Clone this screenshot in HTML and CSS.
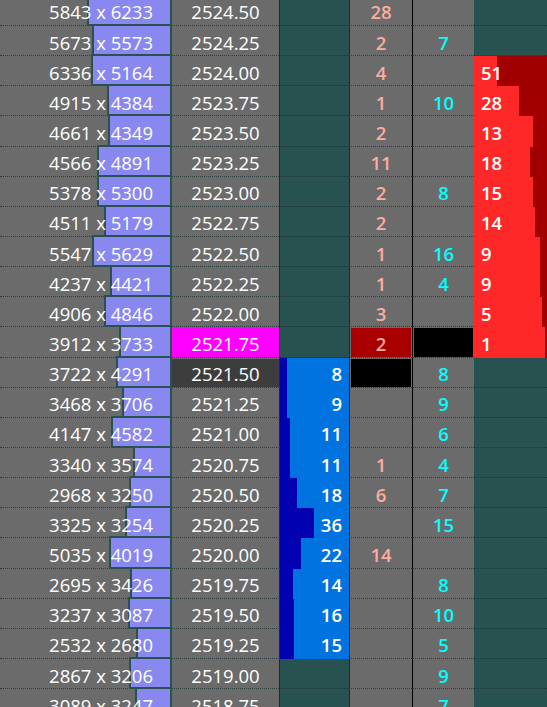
FILE: index.html
```html
<!DOCTYPE html>
<html lang="en">

<head>
    <meta charset="UTF-8">
    <meta name="viewport" content="width=device-width, initial-scale=1.0">
    <title>DOM</title>
    <link rel="stylesheet" href="styles.css">
</head>

<body>
    <div class="ladder" id="ladder"></div>
    <script>
        // price, bid, ask, bar width, buy qty, buy dark part, sold, bought, sell qty, sell dark part
        var rows = [
            ["2524.50", 5843, 6233, 85, "", 0, "28", "", "", 0],
            ["2524.25", 5673, 5573, 80, "", 0, "2", "7", "", 0],
            ["2524.00", 6336, 5164, 81, "", 0, "4", "", "51", 50],
            ["2523.75", 4915, 4384, 65, "", 0, "1", "10", "28", 28],
            ["2523.50", 4661, 4349, 64, "", 0, "2", "", "13", 14],
            ["2523.25", 4566, 4891, 75, "", 0, "11", "", "18", 17],
            ["2523.00", 5378, 5300, 75, "", 0, "2", "8", "15", 14],
            ["2522.75", 4511, 5179, 68, "", 0, "2", "", "14", 12],
            ["2522.50", 5547, 5629, 80, "", 0, "1", "16", "9", 7],
            ["2522.25", 4237, 4421, 62, "", 0, "1", "4", "9", 7],
            ["2522.00", 4906, 4846, 68, "", 0, "3", "", "5", 5],
            ["2521.75", 3912, 3733, 53, "", 0, "2", "", "1", 2],
            ["2521.50", 3722, 4291, 56, "8", 7, "", "8", "", 0],
            ["2521.25", 3468, 3706, 50, "9", 7, "", "9", "", 0],
            ["2521.00", 4147, 4582, 61, "11", 10, "", "6", "", 0],
            ["2520.75", 3340, 3574, 39, "11", 10, "1", "4", "", 0],
            ["2520.50", 2968, 3250, 43, "18", 17, "6", "7", "", 0],
            ["2520.25", 3325, 3254, 47, "36", 34, "", "15", "", 0],
            ["2520.00", 5035, 4019, 63, "22", 21, "14", "", "", 0],
            ["2519.75", 2695, 3426, 42, "14", 13, "", "8", "", 0],
            ["2519.50", 3237, 3087, 44, "16", 14, "", "10", "", 0],
            ["2519.25", 2532, 2680, 36, "15", 14, "", "5", "", 0],
            ["2519.00", 2867, 3206, 43, "", 0, "", "9", "", 0],
            ["2518.75", 3089, 3247, 37, "", 0, "", "7", "", 0]
        ];
        var last = "2521.75";
        var ladder = document.getElementById("ladder");

        for (var i = 0, len = rows.length; i < len; i++) {
            var r = rows[i];
            var row = document.createElement("div");
            row.className = "row";

            var priceCls = "price";
            if (r[0] === last) priceCls += " last";
            if (i > 0 && rows[i - 1][0] === last) priceCls += " next";

            var buyCls = r[4] ? "buy fill" : "buy";
            var sellCls = r[8] ? "sell fill" : "sell";
            var soldCls = "sold";
            var boughtCls = "bought";
            // markers for last trade
            if (r[0] === last) { soldCls += " hit"; boughtCls += " dark"; }
            if (i > 0 && rows[i - 1][0] === last) soldCls += " dark";

            row.innerHTML =
                '<div class="size"><span class="bar" style="width:' + r[3] + 'px"></span>' +
                '<span class="qty">' + r[1] + ' x ' + r[2] + '</span></div>' +
                '<div class="' + priceCls + '">' + r[0] + '</div>' +
                '<div class="' + buyCls + '" style="--d:' + r[5] + 'px">' + r[4] + '</div>' +
                '<div class="' + soldCls + '">' + r[6] + '</div>' +
                '<div class="' + boughtCls + '">' + r[7] + '</div>' +
                '<div class="' + sellCls + '" style="--d:' + r[9] + 'px">' + r[8] + '</div>';
            ladder.appendChild(row);
        }
    </script>
</body>

</html>
```

FILE: styles.css
```css
*{
    margin: 0;padding: 0;
    box-sizing: border-box;
}
body{
    background-color: #6b6b6b;
    overflow: hidden;
    font-family: "Open Sans", "Noto Sans", sans-serif;
    font-size: 18.5px;
    color: #fff;
}
.ladder{
    margin-top: -4.15px;
}
.row{
    display: grid;
    grid-template-columns: 172px 107px 70px 63px 62px 73px;
    height: 30.15px;
}
.row > div{
    display: flex;
    align-items: center;
    padding-top: 3px;
    border-bottom: 1px dotted rgba(10, 40, 40, 0.65);
    white-space: nowrap;
}
/* bid x ask with the purple bar behind */
.row > .size{
    display: grid;
    padding-top: 0;
    align-items: stretch;
}
.bar, .qty{
    grid-area: 1 / 1;
}
.bar{
    justify-self: end;
    height: calc(100% + 1px);
    margin-bottom: -1px;
    background-color: #8888f0;
    border: 2px solid #285250;
    border-top: 0;
    box-shadow: 0 -2px 0 #285250;
}
.qty{
    justify-self: end;
    align-self: center;
    padding-top: 3px;
    padding-right: 19px;
}
.price{
    justify-content: center;
    background-clip: padding-box;
}
.price.last{
    background-color: #ff00ff;
    box-shadow: inset 0 1px 0 #6b6b6b;
}
.price.next{
    background-color: #3d3d3d;
    box-shadow: inset 0 1px 0 #6b6b6b;
}
/* volume columns */
.buy, .sold, .bought, .sell{
    font-weight: 600;
}
.buy{
    justify-content: flex-end;
    padding-right: 7px;
    border-left: 1px solid #1e2b2b;
    background-color: #285250;
}
.buy.fill{
    background: linear-gradient(to right, #0000b0 var(--d), #0073e1 var(--d));
}
.sold{
    justify-content: center;
    border-left: 1px solid #1e2b2b;
    color: #ffaba0;
    background-clip: padding-box;
}
.bought{
    justify-content: center;
    border-left: 1px solid #000;
    color: #00ffff;
    background-clip: padding-box;
}
.hit{
    background-color: #a80000;
    box-shadow: inset 0 1px 0 #6b6b6b, inset 1px 0 0 #6b6b6b, inset -1px 0 0 #6b6b6b;
}
.dark{
    background-color: #000;
    box-shadow: inset 0 1px 0 #6b6b6b, inset 1px 0 0 #6b6b6b, inset -1px 0 0 #6b6b6b;
}
.sell{
    padding-left: 7px;
    background-color: #285250;
}
.sell.fill{
    background: linear-gradient(to left, #a00000 var(--d), #ff2828 var(--d));
}
.buy.fill, .sell.fill{
    border-bottom-color: transparent;
}
```
